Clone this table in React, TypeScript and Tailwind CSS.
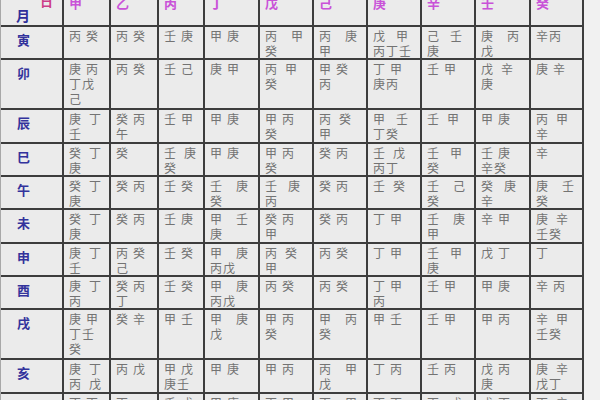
const stems = ["甲", "乙", "丙", "丁", "戊", "己", "庚", "辛", "壬", "癸"];

// each cell is a list of lines; runs of spaces set the gap between two stems
const rows: { label: string; cells: string[][] }[] = [
  {
    label: "寅",
    cells: [["丙 癸"], ["丙 癸"], ["壬 庚"], ["甲 庚"], ["丙    甲", "癸"], ["丙    庚", "甲"], ["戊   甲", "丙丁壬"], ["己   壬", "庚"], ["庚    丙", "戊"], ["辛丙"]],
  },
  {
    label: "卯",
    cells: [["庚 丙", "丁戊", "己"], ["丙 癸"], ["壬 己"], ["庚 甲"], ["丙  甲", "癸"], ["甲 癸", "丙"], ["丁 甲", "庚丙"], ["壬 甲"], ["戊  辛", "庚"], ["庚 辛"]],
  },
  {
    label: "辰",
    cells: [["庚  丁", "壬"], ["癸 丙", "午"], ["壬 甲"], ["甲 庚"], ["甲 丙", "癸"], ["丙  癸", "甲"], ["甲   壬", "丁癸"], ["壬  甲"], ["甲 庚"], ["丙  甲", "辛"]],
  },
  {
    label: "巳",
    cells: [["癸  丁", "庚"], ["癸"], ["壬  庚", "癸"], ["甲 庚"], ["甲 丙", "癸"], ["癸 丙"], ["壬  戊", "丙丁"], ["壬   甲", "癸"], ["壬 庚", "辛癸"], ["辛"]],
  },
  {
    label: "午",
    cells: [["癸  丁", "庚"], ["癸 丙"], ["壬 癸"], ["壬    庚", "癸"], ["壬   庚", "丙"], ["癸 丙"], ["壬  癸"], ["壬    己", "癸"], ["癸   庚", "辛"], ["庚    壬", "癸"]],
  },
  {
    label: "未",
    cells: [["癸  丁", "庚"], ["癸 丙"], ["壬 庚"], ["甲    壬", "庚"], ["癸 丙", "甲"], ["癸 丙"], ["丁 甲"], ["壬    庚", "甲"], ["辛 甲"], ["庚  辛", "壬癸"]],
  },
  {
    label: "申",
    cells: [["庚  丁", "壬"], ["丙 癸", "己"], ["壬 癸"], ["甲    庚", "丙戊"], ["丙  癸", "甲"], ["丙 癸"], ["丁 甲"], ["壬   甲", "庚"], ["戊 丁"], ["丁"]],
  },
  {
    label: "酉",
    cells: [["庚  丁", "丙"], ["癸 丙", "丁"], ["壬 癸"], ["甲    庚", "丙戊"], ["丙 癸"], ["丙 癸"], ["丁 甲", "丙"], ["壬 甲"], ["甲 庚"], ["辛 丙"]],
  },
  {
    label: "戌",
    cells: [["庚 甲", "丁壬", "癸"], ["癸 辛"], ["甲 壬"], ["甲    庚", "戊"], ["甲 丙", "癸"], ["甲    丙", "癸"], ["甲 壬"], ["壬 甲"], ["甲 丙"], ["辛  甲", "壬癸"]],
  },
  {
    label: "亥",
    cells: [["庚  丁", "丙  戊"], ["丙 戊"], ["甲 戊", "庚壬"], ["甲 庚"], ["甲 丙"], ["丙    甲", "戊"], ["丁 丙"], ["壬 丙"], ["戊 丙", "庚"], ["庚  辛", "戊丁"]],
  },
  {
    label: "子",
    cells: [["丁 丙"], ["丙"], ["壬 戊"], ["甲 庚"], ["丙 甲"], ["丙    甲"], ["丁 丙"], ["丙   戊"], ["戊 丙"], ["丙  辛"]],
  },
];

const gaps: Record<number, string> = {
  1: "w-[4px]",
  2: "w-[7px]",
  3: "w-[10px]",
  4: "w-[13px]",
};

const Line = ({ text }: { text: string }) => {
  const parts = text.split(/(\s+)/).filter((p) => p.length > 0);
  return (
    <div className="flex h-[15px] leading-[15px]">
      {parts.map((p, i) =>
        p.trim() === "" ? (
          <span key={i} className={gaps[Math.min(p.length, 4)]} />
        ) : (
          p.split("").map((ch, j) => (
            <span key={`${i}-${j}`} className="w-[13px] shrink-0">
              {ch}
            </span>
          ))
        )
      )}
    </div>
  );
};

export default function App() {
  return (
    <div className="w-[600px] h-[400px] overflow-hidden bg-[#f1f1f1] font-['Noto_Sans_CJK_SC',sans-serif]">
      <div className="-mt-[8px] flex">
        <div className="grid grid-cols-[61px_45px_46px_44px_53px_52px_52px_52px_52px_53px_51px] grid-rows-[31px_31px_48px_32px_31px_31px_32px_31px_31px_48px_32px_40px] gap-[2px] bg-[#3d3d3d] py-[2px] pr-[2px] border-l border-[#a8a8a8]">
          {/* corner cell: 日 over the stems, 月 beside the branches */}
          <div className="bg-[#ebebeb] flex flex-col justify-between">
            <span className="self-end mr-[9px] text-[13px] leading-[14px] font-bold text-[#cc3d88]">
              日
            </span>
            <span className="self-start ml-[15px] mb-[2px] text-[14px] leading-[15px] font-bold text-[#2f2f9a]">
              月
            </span>
          </div>
          {stems.map((s) => (
            <div key={s} className="bg-[#ebebeb] pl-[5px] pt-[1px] text-[13px] leading-[15px] font-bold text-[#c952d8]">
              {s}
            </div>
          ))}

          {rows.map((row) => (
            <>
              <div key={row.label} className="bg-[#ebebeb] pl-[16px] pt-[5px] text-[13px] leading-[16px] font-bold text-[#33339c]">
                {row.label}
              </div>
              {row.cells.map((lines, ci) => (
                <div key={`${row.label}-${ci}`} className="bg-[#ebebeb] pl-[5px] pt-[1px] text-[12px] text-[#737373]">
                  {lines.map((l, li) => (
                    <Line key={li} text={l} />
                  ))}
                </div>
              ))}
            </>
          ))}
        </div>
      </div>
    </div>
  );
}
